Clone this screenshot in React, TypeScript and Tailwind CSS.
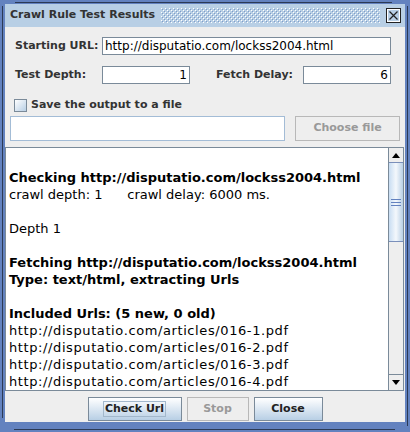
import React from "react";

const sans = "font-['DejaVu_Sans',sans-serif]";

function TitleDots() {
  return (
    <svg className="flex-1 h-[15px] ml-[6px]" width="100%" height="15">
      <defs>
        <pattern id="bumps" width="4" height="4" patternUnits="userSpaceOnUse">
          <rect x="0" y="0" width="1" height="1" fill="#ffffff" />
          <rect x="1" y="1" width="1" height="1" fill="#7f9cc9" />
          <rect x="2" y="2" width="1" height="1" fill="#ffffff" />
          <rect x="3" y="3" width="1" height="1" fill="#7f9cc9" />
        </pattern>
      </defs>
      <rect width="100%" height="15" fill="url(#bumps)" />
    </svg>
  );
}

function CloseBox() {
  return (
    <svg width="15" height="15" className="ml-[6px] mr-[4px] shrink-0">
      <rect x="0.5" y="0.5" width="14" height="14" fill="#b8cfe5" stroke="#222" />
      <rect x="1.5" y="1.5" width="12" height="12" fill="none" stroke="#fff" />
      <path d="M3.5 3.5 L11.5 11.5 M11.5 3.5 L3.5 11.5" stroke="#222" strokeWidth="1.2" />
    </svg>
  );
}

function Field({ w, value, right }: { w: string; value: string; right?: boolean }) {
  return (
    <div
      className={`${w} h-[18px] bg-white border border-[#7a8a99] flex items-center px-[2px] text-[12px] text-black ${
        right ? "justify-end" : ""
      }`}
    >
      {value}
    </div>
  );
}

const log: { t: string; b?: boolean; u?: boolean }[] = [
  { t: "" },
  { t: "Checking http://disputatio.com/lockss2004.html", b: true },
  { t: "crawl depth: 1      crawl delay: 6000 ms." },
  { t: "" },
  { t: "Depth 1" },
  { t: "" },
  { t: "Fetching http://disputatio.com/lockss2004.html", b: true },
  { t: "Type: text/html, extracting Urls", b: true },
  { t: "" },
  { t: "Included Urls: (5 new, 0 old)", b: true },
  { t: "http://disputatio.com/articles/016-1.pdf", u: true },
  { t: "http://disputatio.com/articles/016-2.pdf", u: true },
  { t: "http://disputatio.com/articles/016-3.pdf", u: true },
  { t: "http://disputatio.com/articles/016-4.pdf", u: true },
];

export default function App() {
  return (
    <div className={`relative w-[410px] h-[432px] bg-[#6382bf] pt-[4px] px-[5px] pb-[10px] flex flex-col ${sans}`}>
      {/* frame lines */}
      <div className="absolute top-[2px] left-[15px] w-[377px] h-px bg-[#2c3a55]" />
      <div className="absolute left-[2px] top-[6px] h-[412px] w-px bg-[#2c3a55]" />
      <div className="absolute top-[429px] left-[14px] w-[381px] h-px bg-[#2c3a55]" />
      <div className="absolute left-[407px] top-[6px] h-[420px] w-px bg-[#2c3a55]" />

      {/* title bar */}
      <div className="h-[23px] bg-[#b8cfe5] flex items-center pl-[5px]">
        <span className="text-[11px] font-bold text-[#333333]">Crawl Rule Test Results</span>
        <TitleDots />
        <CloseBox />
      </div>

      {/* body */}
      <div className="flex-1 bg-[#eeeeee] flex flex-col text-[11px] text-[#333333]">
        <div className="mt-[10px] flex items-center h-[18px]">
          <span className="w-[97px] pl-[10px] font-bold">Starting URL:</span>
          <Field w="w-[289px]" value="http://disputatio.com/lockss2004.html" />
        </div>

        <div className="mt-[11px] flex items-center h-[18px]">
          <span className="w-[97px] pl-[10px] font-bold">Test Depth:</span>
          <Field w="w-[88px]" value="1" right />
          <span className="w-[87px] ml-[26px] font-bold">Fetch Delay:</span>
          <Field w="w-[88px]" value="6" right />
        </div>

        <div className="mt-[15px] flex items-center h-[13px]">
          <div className="ml-[9px] w-[13px] h-[13px] border border-[#7a8a99] bg-gradient-to-br from-[#ffffff] to-[#b8cfe5]" />
          <span className="ml-[4px] font-bold">Save the output to a file</span>
        </div>

        <div className="mt-[4px] flex h-[25px]">
          <div className="ml-[5px] w-[275px] bg-white border border-[#a3bcd6]" />
          <div className="ml-[10px] w-[105px] border border-[#b8b8b8] flex items-center justify-center font-bold text-[#999999]">
            Choose file
          </div>
        </div>

        <div className="mt-[6px] w-[399px] h-[244px] border border-[#7a8a99] bg-white flex">
          <div className="flex-1 overflow-hidden pt-[4px] pl-[3px] text-[13px] leading-[17px] text-black whitespace-pre">
            {log.map((l, i) => (
              <div
                key={i}
                className={`h-[17px] ${l.b ? "font-bold" : ""} ${l.u ? "tracking-[0.6px]" : ""}`}
              >
                {l.t}
              </div>
            ))}
          </div>
          <div className="w-[15px] border-l border-[#7a8a99] bg-[#eeeeee] flex flex-col">
            <div className="h-[15px] border-b border-[#7a8a99] flex items-center justify-center">
              <svg width="8" height="5">
                <path d="M4 0 L8 5 L0 5 Z" fill="#000" />
              </svg>
            </div>
            <div className="h-[80px] border-y border-[#7a8fba] bg-gradient-to-r from-[#c8ddf2] via-[#f4f8fc] to-[#b8cfe5] flex items-center justify-center -mt-px">
              <svg width="10" height="7">
                <rect x="0" y="0" width="10" height="1" fill="#6382bf" />
                <rect x="0" y="3" width="10" height="1" fill="#6382bf" />
                <rect x="0" y="6" width="10" height="1" fill="#6382bf" />
              </svg>
            </div>
            <div className="flex-1" />
            <div className="h-[16px] border-t border-[#7a8a99] flex items-center justify-center">
              <svg width="8" height="5">
                <path d="M0 0 L8 0 L4 5 Z" fill="#000" />
              </svg>
            </div>
          </div>
        </div>

        <div className="mt-[6px] h-[24px] flex justify-center gap-[5px] font-bold">
          <div className="w-[94px] border border-[#7a8a99] bg-gradient-to-b from-[#ffffff] to-[#b8cfe5] flex items-center justify-center">
            <span className="border border-[#a3b8cc] px-[1px] leading-[14px] text-[#222222]">Check Url</span>
          </div>
          <div className="w-[62px] border border-[#b8b8b8] flex items-center justify-center text-[#999999]">
            Stop
          </div>
          <div className="w-[69px] border border-[#7a8a99] bg-gradient-to-b from-[#ffffff] to-[#b8cfe5] flex items-center justify-center text-[#222222]">
            Close
          </div>
        </div>
      </div>
    </div>
  );
}
